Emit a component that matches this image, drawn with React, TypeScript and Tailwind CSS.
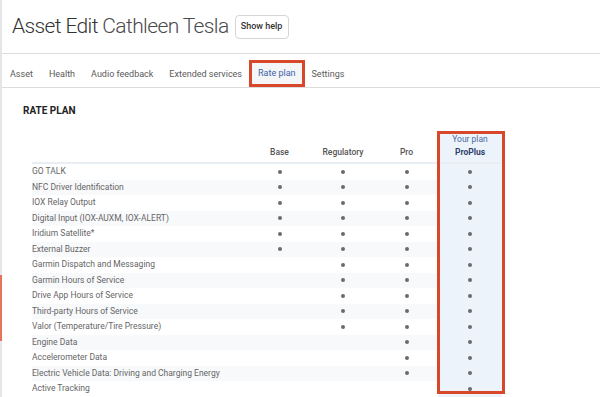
import React from 'react';

type Feature = { name: string; plans: [boolean, boolean, boolean, boolean] };

const FEATURES: Feature[] = [
  { name: 'GO TALK', plans: [true, true, true, true] },
  { name: 'NFC Driver Identification', plans: [true, true, true, true] },
  { name: 'IOX Relay Output', plans: [true, true, true, true] },
  { name: 'Digital Input (IOX-AUXM, IOX-ALERT)', plans: [true, true, true, true] },
  { name: 'Iridium Satellite*', plans: [true, true, true, true] },
  { name: 'External Buzzer', plans: [true, true, true, true] },
  { name: 'Garmin Dispatch and Messaging', plans: [false, true, true, true] },
  { name: 'Garmin Hours of Service', plans: [false, true, true, true] },
  { name: 'Drive App Hours of Service', plans: [false, true, true, true] },
  { name: 'Third-party Hours of Service', plans: [false, true, true, true] },
  { name: 'Valor (Temperature/Tire Pressure)', plans: [false, true, true, true] },
  { name: 'Engine Data', plans: [false, false, true, true] },
  { name: 'Accelerometer Data', plans: [false, false, true, true] },
  { name: 'Electric Vehicle Data: Driving and Charging Energy', plans: [false, false, true, true] },
  { name: 'Active Tracking', plans: [false, false, false, true] },
];

const TABS = ['Asset', 'Health', 'Audio feedback', 'Extended services', 'Rate plan', 'Settings'];

function Dot({ on }: { on: boolean }) {
  return on ? <span className="block w-[4px] h-[4px] rounded-full bg-[#6b6b6b]" /> : null;
}

export default function App() {
  return (
    <div className="flex w-[600px] h-[397px] overflow-hidden bg-white" style={{ fontFamily: 'Roboto, "Liberation Sans", sans-serif' }}>
      {/* left edge shadow */}
      <div className="w-[2px] flex flex-col bg-[#e6e6e6]">
        <div className="h-[275px]" />
        <div className="h-[66px] bg-[#e8735c]" />
      </div>

      <div className="flex-1 flex flex-col">
        {/* title */}
        <div className="h-[54px] flex items-center pl-[10px] gap-[6px] border-b border-[#dcdcdc]">
          <h1 className="text-[21px] leading-none font-light tracking-[-0.62px] text-[#333]">
            Asset Edit <span className="text-[#4a4a4a]">Cathleen Tesla</span>
          </h1>
          <button className="h-[24px] w-[54px] border border-[#d6d6d6] rounded-[4px] text-[9px] font-medium text-[#333] bg-white">
            Show help
          </button>
        </div>

        {/* tabs */}
        <div className="relative h-[34px] flex items-end border-b border-[#dcdcdc]">
          {TABS.map((t) => (
            <div
              key={t}
              className={`h-[25px] flex items-center px-[8px] text-[9px] ${
                t === 'Rate plan' ? 'bg-[#f4f5f7] text-[#3d64a8] border-b-2 border-[#3d64a8] relative' : 'text-[#5a5a5a]'
              }`}
            >
              {t}
              {t === 'Rate plan' && (
                <span className="absolute -left-[1px] -right-[1px] -top-[2px] -bottom-[2px] border-[3px] border-[#d9472b]" />
              )}
            </div>
          ))}
        </div>

        {/* content */}
        <div className="pl-[21px] pt-[17px]">
          <div className="text-[10px] leading-[12px] font-bold text-[#222]">RATE PLAN</div>

          <div className="relative ml-[9px] mt-[15px] w-[471px]">
            <div className="grid grid-cols-[216px_63px_64px_63px_64px] h-[32px] border-b-2 border-[#e9eef5] text-[8.5px] font-medium text-[#555]">
              <div />
              <div className="flex items-end justify-center pb-[3px]">Base</div>
              <div className="flex items-end justify-center pb-[3px]">Regulatory</div>
              <div className="flex items-end justify-center pb-[3px]">Pro</div>
              <div className="flex flex-col items-center justify-end pb-[3px] bg-[#edf3fb]">
                <span className="text-[#4d6aa0] font-normal mb-[1px]">Your plan</span>
                <span className="font-bold text-[#2d3f6e]">ProPlus</span>
              </div>
            </div>
            {FEATURES.map((f, i) => (
              <div
                key={f.name}
                className={`grid grid-cols-[216px_63px_64px_63px_64px] h-[15.5px] text-[8.5px] text-[#666] ${
                  i % 2 === 1 ? 'bg-[#f8f9fb]' : 'bg-white'
                }`}
              >
                <div className="flex items-center whitespace-nowrap">{f.name}</div>
                {f.plans.map((on, j) => (
                  <div key={j} className={`flex items-center justify-center ${j === 3 ? 'bg-[#edf3fb]' : ''}`}>
                    <Dot on={on} />
                  </div>
                ))}
              </div>
            ))}
            {/* annotation box around plan column */}
            <span className="absolute left-[405px] top-[-1px] w-[68px] h-[263px] border-[3px] border-[#d9472b] pointer-events-none" />
          </div>
        </div>
      </div>
    </div>
  );
}
